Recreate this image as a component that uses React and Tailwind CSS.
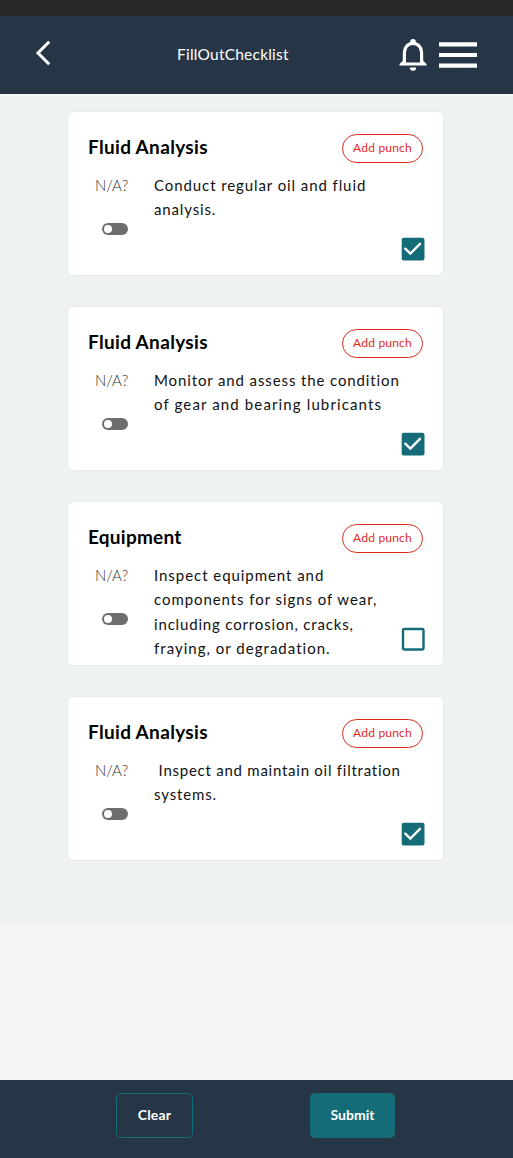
const items = [
  {
    title: "Fluid Analysis",
    titleTracking: "tracking-[0.33px]",
    lines: [
      ["Conduct regular oil and fluid", "tracking-[0.91px]"],
      ["analysis.", "tracking-[0.85px]"],
    ],
    done: true,
  },
  {
    title: "Fluid Analysis",
    titleTracking: "tracking-[0.33px]",
    lines: [
      ["Monitor and assess the condition", "tracking-[0.88px]"],
      ["of gear and bearing lubricants", "tracking-[1.13px]"],
    ],
    done: true,
  },
  {
    title: "Equipment",
    titleTracking: "tracking-[0.25px]",
    lines: [
      ["Inspect equipment and", "tracking-[0.95px]"],
      ["components for signs of wear,", "tracking-[0.93px]"],
      ["including corrosion, cracks,", "tracking-[0.83px]"],
      ["fraying, or degradation.", "tracking-[1.02px]"],
    ],
    done: false,
  },
  {
    title: "Fluid Analysis",
    titleTracking: "tracking-[0.33px]",
    lines: [
      [" Inspect and maintain oil filtration", "tracking-[0.75px]"],
      ["systems.", "tracking-[0.85px]"],
    ],
    done: true,
  },
];

function Toggle() {
  return (
    <span className="mt-[27px] ml-[14px] flex h-3 w-[26px] items-center rounded-full bg-[#6e6e6e] pl-[2px]">
      <span className="size-2 rounded-full bg-white" />
    </span>
  );
}

function Checkbox({ checked }) {
  return (
    <svg viewBox="0 0 24 24" className="size-6" fill="none">
      {checked ? (
        <>
          <rect x="0.7" y="0.7" width="22.8" height="22.8" rx="2" fill="#146c78" />
          <path d="M4.3 11.7 9.3 16.5 19 6.8" stroke="white" strokeWidth="2.4" strokeLinecap="round" />
        </>
      ) : (
        <rect x="2" y="2" width="20.5" height="20.5" rx="1.2" stroke="#146c78" strokeWidth="2.4" />
      )}
    </svg>
  );
}

function Card({ item }) {
  return (
    <article className="flex h-[165px] w-[377px] flex-col rounded-md border border-[#e8ebec] bg-white pr-[18px] pl-5">
      <div className="flex h-[58px] items-start justify-between pt-[22px]">
        <h2 className={`text-[19px] leading-[26px] font-bold text-black ${item.titleTracking}`}>{item.title}</h2>
        <button className="mr-[2px] flex h-[29px] w-[81px] justify-center rounded-full border border-[#e3291c] text-[12px] leading-[25px] tracking-[0.2px] text-[#e3291c]">
          Add punch
        </button>
      </div>
      <div className="flex min-h-0 flex-1">
        <div className="flex w-[66px] flex-col pt-[4px]">
          <span className="pl-[7px] text-[15px] leading-[22px] font-light text-[#333]">N/A?</span>
          <Toggle />
        </div>
        <p className="flex flex-1 flex-col pt-[3px] text-[15px] leading-[24.25px] text-[#111]">
          {item.lines.map(([text, tracking]) => (
            <span key={text} className={`whitespace-pre ${tracking}`}>{text}</span>
          ))}
        </p>
        <div className="-ml-6 flex items-end pb-[14px]">
          <Checkbox checked={item.done} />
        </div>
      </div>
    </article>
  );
}

export default function App() {
  return (
    <div className="flex h-[1158px] w-[513px] flex-col overflow-hidden bg-[#f5f5f5] font-['Lato','Open_Sans',sans-serif]">
      <div className="h-4 bg-[#282828]" />
      <header className="flex h-[78px] items-center bg-[#273646]">
        <svg viewBox="0 0 16 26" className="mb-1 ml-[35px] h-[26px] w-4" fill="none" stroke="white" strokeWidth="3">
          <path d="M14.2 1.8 3 13 14.2 24.2" />
        </svg>
        <h1 className="ml-[126px] w-[112px] text-[15.5px] tracking-[0.22px] whitespace-nowrap text-white">FillOutChecklist</h1>
        <svg viewBox="0 0 28 34" className="ml-[110px] h-[34px] w-7" fill="none">
          <path d="M5.4 26V14.4a8.6 9.1 0 0 1 17.2 0V26" stroke="white" strokeWidth="3.2" />
          <path d="M11.2 6V3.8a2.8 2.8 0 0 1 5.6 0V6zM4 22.5.5 26v1.6h27V26L24 22.5v2H4zM10.8 29.5h6.4a3.2 3.2 0 0 1-6.4 0z" fill="white" />
        </svg>
        <svg viewBox="0 0 38 26" className="ml-3 h-[26px] w-[38px]" fill="white">
          <path d="M0 0.2h38v4.3H0zM0 10.9h38v4.2H0zM0 21.4h38v4.3H0z" />
        </svg>
      </header>
      <main className="flex h-[831px] flex-col items-center gap-[30px] border-t-2 border-[#f8f9f9] bg-[#eef2f3] pt-[15px] pr-[2px]">
        {items.map((item, index) => (
          <Card key={index} item={item} />
        ))}
      </main>
      <div className="flex-1" />
      <footer className="flex h-[78px] items-start bg-[#273646] pt-[13px] text-[14px] font-bold text-white">
        <button className="ml-[116px] h-[45px] w-[77px] rounded-[5px] border border-[#146c78] pb-[3px] tracking-[0.2px]">Clear</button>
        <button className="ml-[117px] h-[45px] w-[85px] rounded-[5px] bg-[#146c78] pb-[3px]">Submit</button>
      </footer>
    </div>
  );
}
